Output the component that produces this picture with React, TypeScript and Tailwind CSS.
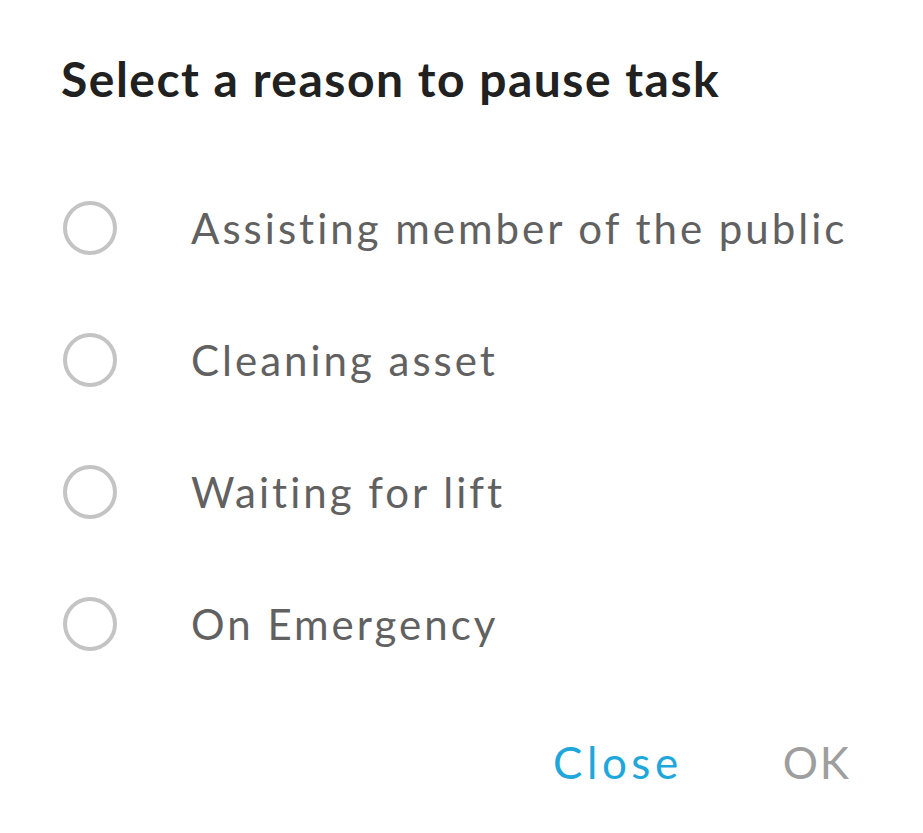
const REASONS = [
  "Assisting member of the public",
  "Cleaning asset",
  "Waiting for lift",
  "On Emergency",
];

function Radio() {
  return <span className="block size-[54px] shrink-0 rounded-full border-[4px] border-[#c4c4c4]" />;
}

export default function App() {
  return (
    <div className="h-[833px] w-[923px] bg-white font-['Lato',sans-serif]">
      <div className="px-[61px] pt-[50px]">
        <h1 className="text-[48px] leading-[58px] font-bold tracking-[1.5px] text-[#212121]">
          Select a reason to pause task
        </h1>
      </div>
      <div className="mt-[93px] flex flex-col gap-[78px] pl-[63px]">
        {REASONS.map((r) => (
          <div key={r} className="flex h-[54px] items-center gap-[74px]">
            <Radio />
            <span className="text-[42px] tracking-[3px] text-[#616161]">{r}</span>
          </div>
        ))}
      </div>
      <div className="mt-[78px] flex justify-end pr-[72px]">
        <button className="mr-[100px] text-[44px] tracking-[4.5px] text-[#1fa7dc]">Close</button>
        <button className="text-[44px] tracking-[2px] text-[#9e9e9e]">OK</button>
      </div>
    </div>
  );
}
